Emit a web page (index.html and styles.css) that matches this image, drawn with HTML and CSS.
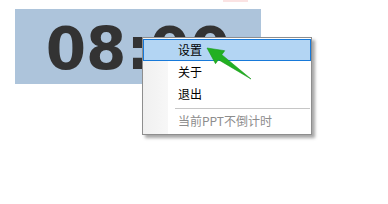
FILE: index.html
```html
<!DOCTYPE html>
<html lang="zh-CN">
<head>
<meta charset="utf-8">
<title>倒计时</title>
<link rel="stylesheet" href="styles.css">
</head>
<body>
<div class="page">
  <div class="topmark"></div>
  <div class="timer">
    <span class="time">08:00</span>
  </div>
</div>

<ul class="menu">
  <li class="item selected">设置</li>
  <li class="item">关于</li>
  <li class="item">退出</li>
  <li class="sep"></li>
  <li class="item disabled">当前PPT不倒计时</li>
</ul>

<svg class="arrow" width="388" height="204" viewBox="0 0 388 204" aria-hidden="true">
  <polygon points="207,48 224.7,50.7 221.8,54.7 251,79 218.4,59.7 215.5,63.7" fill="#22b022" stroke="#1a9a1a" stroke-width="0.6" stroke-linejoin="round"/>
</svg>
</body>
</html>
```

FILE: styles.css
```css
html, body {
  margin: 0;
  padding: 0;
  background: #ffffff;
}

body {
  width: 388px;
  height: 204px;
  overflow: hidden;
  position: relative;
}

.page {
  padding: 9px 0 0 15px;
  position: relative;
}

.topmark {
  position: absolute;
  left: 223px;
  top: 0;
  width: 25px;
  height: 2px;
  background: #fbe3e3;
}

.timer {
  width: 246px;
  height: 75px;
  box-sizing: border-box;
  padding-top: 5px;
  background: #adc4db;
  display: flex;
  align-items: center;
  justify-content: center;
}

.time {
  font-family: "DejaVu Sans", sans-serif;
  font-weight: bold;
  font-size: 58px;
  line-height: 1;
  color: #333333;
}

.menu {
  position: absolute;
  left: 142px;
  top: 37px;
  width: 168px;
  margin: 0;
  padding: 1px 0 2px 0;
  list-style: none;
  border: 1px solid #8e8e8e;
  background: linear-gradient(to right, #f0f0f0 0, #f7f7f7 25px, #ffffff 25px);
  box-shadow: 3px 3px 3px rgba(0, 0, 0, 0.35);
  font-family: "Noto Sans CJK SC", "Noto Sans", sans-serif;
  font-size: 12px;
  color: #000000;
}

.item {
  height: 20px;
  line-height: 20px;
  padding-left: 34px;
  border: 1px solid transparent;
}

.item.selected {
  background: #b3d5f3;
  border-color: #1779d9;
}

.item.disabled {
  color: #8d8d8d;
}

.sep {
  height: 5px;
  margin-left: 32px;
  margin-right: 1px;
  box-sizing: border-box;
  padding-top: 3px;
}

.sep::after {
  content: "";
  display: block;
  height: 1px;
  background: #c6c6c6;
}

.arrow {
  position: absolute;
  left: 0;
  top: 0;
  pointer-events: none;
}
```
